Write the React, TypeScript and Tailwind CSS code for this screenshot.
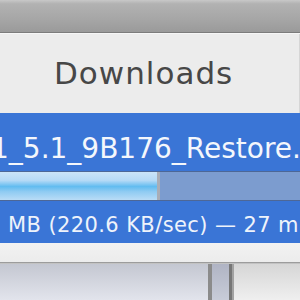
export default function App() {
  return (
    <div className="w-[300px] h-[300px] overflow-hidden bg-[#ececec] flex flex-col font-['DejaVu_Sans',sans-serif]">
      {/* title bar */}
      <div className="h-[32px] shrink-0 bg-[linear-gradient(to_bottom,#c8c8c8_0%,#b2b2b2_12%,#a6a6a6_60%,#9a9a9a_100%)]" />
      <div className="h-px shrink-0 bg-[#7c7c7c]" />
      <div className="h-px shrink-0 bg-[#f6f6f6]" />

      {/* heading */}
      <div className="h-[79px] shrink-0 pl-[54px] pt-[21px] border-r border-[#d6d6d6]">
        <h1 className="text-[31px] leading-[36px] tracking-[1px] text-[#474747] whitespace-nowrap">
          Downloads
        </h1>
      </div>

      {/* selected download row */}
      <div className="h-[130px] shrink-0 bg-[#3a75d6] flex flex-col overflow-hidden">
        <div className="mt-[20px] ml-[-9px] text-[28px] leading-[32px] text-[#f4f7fc] whitespace-nowrap">
          1_5.1_9B176_Restore.ipsw
        </div>
        <div className="mt-[6px] h-[30px] flex border-t border-b border-[#4d6796] bg-[#7c9ccf]">
          <div className="w-[157px] bg-[linear-gradient(to_bottom,#cbe4f8_0%,#b6daf6_30%,#62bcf0_52%,#8fcbf2_70%,#b9dcf6_100%)]" />
          <div className="w-[3px] bg-[#a9adb6]" />
          <div className="flex-1" />
        </div>
        <div className="mt-[11px] pl-[8px] text-[21px] leading-[26px] tracking-[0.4px] text-[#eef3fb] whitespace-nowrap">
          MB (220.6 KB/sec) — 27 minutes remaining
        </div>
      </div>

      {/* strip below row */}
      <div className="h-[19px] shrink-0 bg-[linear-gradient(to_bottom,#f2f2f2,#ececec)]" />
      <div className="h-px shrink-0 bg-[#9c9c9c]" />
      <div className="h-px shrink-0 bg-[#c2c2c2]" />

      {/* bottom bar */}
      <div className="flex-1 flex">
        <div className="w-[208px] bg-[linear-gradient(to_bottom,#c4c7d1,#e2e4ec)]" />
        <div className="w-[4px] bg-[#8b8b8b]" />
        <div className="w-[17px] bg-[linear-gradient(to_bottom,#b0b4c4,#c8ccd8)]" />
        <div className="w-[3px] bg-[#777777]" />
        <div className="w-[2px] bg-[#a2a2a2]" />
        <div className="flex-1 bg-[linear-gradient(to_bottom,#d6d6d6,#efefef)]" />
      </div>
    </div>
  );
}
